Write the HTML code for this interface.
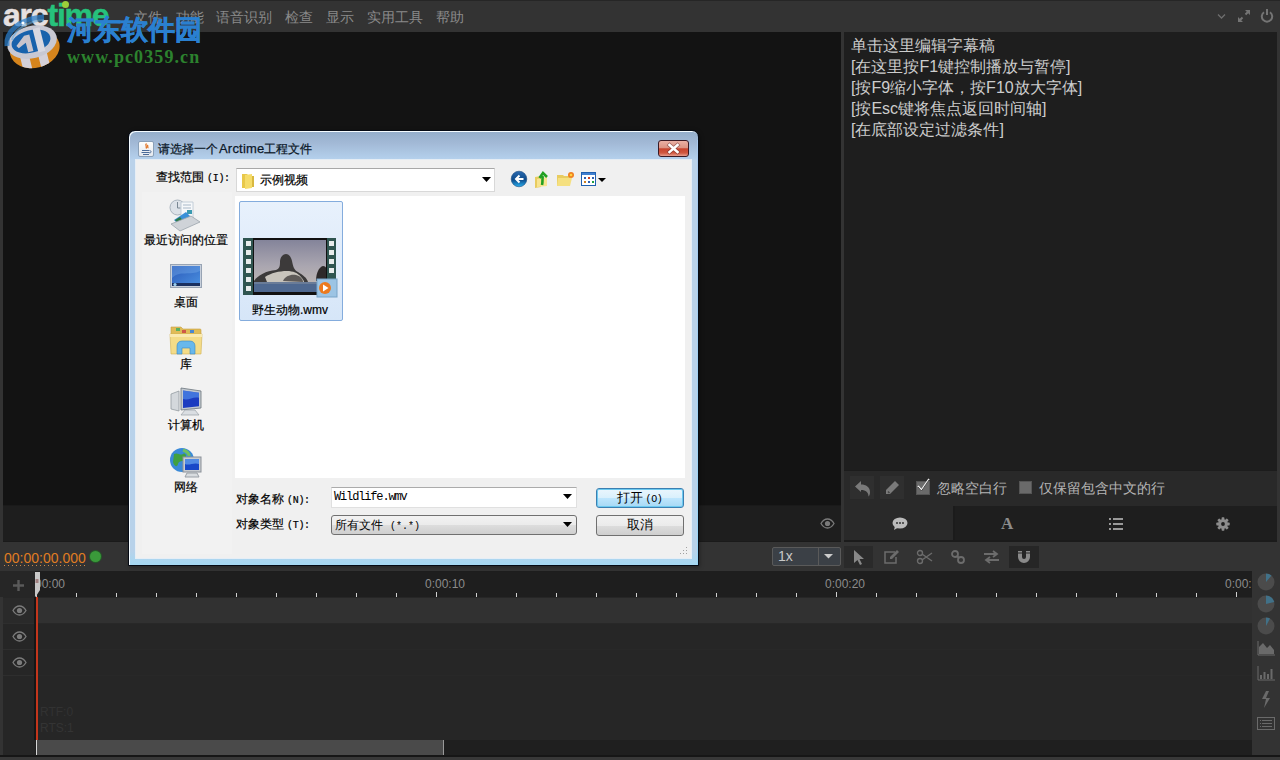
<!DOCTYPE html>
<html><head><meta charset="utf-8">
<style>
*{margin:0;padding:0;box-sizing:border-box}
html,body{width:1280px;height:760px;overflow:hidden;background:#333;font-family:"Liberation Sans",sans-serif}
.a{position:absolute}
#topline{left:0;top:0;width:1280px;height:1px;background:#262626}
.mi{position:absolute;top:9px;font-size:14px;color:#8a8a8a;line-height:16px;white-space:nowrap}
#video{left:3px;top:32px;width:838px;height:473px;background:#131313}
#vbar{left:3px;top:505px;width:838px;height:37px;background:#1e1e1e;border-top:1px solid #1a1a1a;border-bottom:1px solid #1a1a1a}
#rtext{left:844px;top:32px;width:433px;height:438px;background:#1e1e1e}
.rl{position:absolute;left:7px;font-size:16px;color:#cdcdcd;line-height:21px;white-space:nowrap}
#rtool{left:844px;top:470px;width:433px;height:36px;background:#292929;border-top:1px solid #1c1c1c}
#rtabs{left:844px;top:506px;width:433px;height:36px;background:#1e1e1e}
#timebar{left:0;top:542px;width:1280px;height:29px;background:#333}
#ruler{left:35px;top:571px;width:1217px;height:26px;background:#1e1e1e}
#tleft{left:3px;top:571px;width:32px;height:184px;background:#262626}
#tracks{left:35px;top:597px;width:1217px;height:143px;background:#262626}
#scroll{left:35px;top:740px;width:1217px;height:15px;background:#1f1f1f}
#rcol{left:1252px;top:571px;width:28px;height:184px;background:#333}
/* dialog */
#dlg{left:128px;top:130px;width:571px;height:436px;border:1px solid #050a14;filter:drop-shadow(1px 1px 2px rgba(0,0,0,.3));border-radius:7px 7px 0 0;background:linear-gradient(180deg,#93adca 0,#a2b9d6 12px,#b4d0ec 28px,#bad2ea 29px,#b8d2ea 420px,#a6d8f2 433px);box-shadow:inset 1px 1px 0 #f4fbff;}
#dinner{left:136px;top:160px;width:555px;height:398px;background:#f0f0f0}
.dt{position:absolute;font-size:13px;color:#000;line-height:15px;white-space:nowrap;-webkit-text-stroke:0.2px #000}
.pl{position:absolute;width:90px;text-align:center;font-size:12px;color:#000;line-height:14px;white-space:nowrap;-webkit-text-stroke:0.2px #000}
.m{font-family:'Liberation Mono',monospace;font-size:10px;letter-spacing:-0.3px;margin-left:3px}
.btn{position:absolute;border:1px solid #707070;border-radius:3px;background:linear-gradient(#f2f2f2,#ebebeb 50%,#dddddd 51%,#cfcfcf);text-align:center;font-size:13px;line-height:18px;color:#000}
</style></head><body>
<div class="a" id="topline"></div>
<span class="mi" style="left:134px">文件</span>
<span class="mi" style="left:176px">功能</span>
<span class="mi" style="left:216px">语音识别</span>
<span class="mi" style="left:285px">检查</span>
<span class="mi" style="left:326px">显示</span>
<span class="mi" style="left:367px">实用工具</span>
<span class="mi" style="left:436px">帮助</span>

<div class="a" id="video"></div>
<div class="a" id="vbar"></div>
<div class="a" id="rtext">
  <div class="rl" style="top:3px">单击这里编辑字幕稿</div>
  <div class="rl" style="top:24px">[在这里按F1键控制播放与暂停]</div>
  <div class="rl" style="top:45px">[按F9缩小字体，按F10放大字体]</div>
  <div class="rl" style="top:66px">[按Esc键将焦点返回时间轴]</div>
  <div class="rl" style="top:87px">[在底部设定过滤条件]</div>
</div>
<div class="a" id="rtool"></div>
<div class="a" id="rtabs"></div>
<div class="a" id="timebar"></div>
<div class="a" id="ruler"></div>
<div class="a" id="tleft"></div>
<div class="a" id="tracks"></div>
<div class="a" id="scroll"></div>
<div class="a" id="rcol"></div>


<!-- right toolbar -->
<div class="a" style="left:850px;top:476px;width:24px;height:23px;background:#2f2f2f"></div>
<svg class="a" style="left:850px;top:476px" width="24" height="23" viewBox="0 0 24 23"><path d="M5 10.5L11 5v3.5c5 0 9 2.5 9 7.5 0 2-0.5 3.5-1.5 4.5 0-4-2.5-6.5-7.5-6.5V16z" fill="#7a7a7a"/></svg>
<div class="a" style="left:880px;top:476px;width:24px;height:23px;background:#2f2f2f"></div>
<svg class="a" style="left:880px;top:476px" width="24" height="23" viewBox="0 0 24 23"><path d="M15 5l4 4-9 9H6v-4z" fill="#7a7a7a"/><path d="M8 15.5l1.5 1.5" stroke="#444" stroke-width="1.5"/></svg>
<div class="a" style="left:916px;top:481px;width:14px;height:14px;background:#6a6a6a;border:1px solid #555"></div>
<svg class="a" style="left:914px;top:477px" width="18" height="18" viewBox="0 0 18 18"><path d="M4 9l3.5 4L15 2" stroke="#f0f0f0" stroke-width="1.6" fill="none"/><path d="M4 10l3.5 4L15 3" stroke="#111" stroke-width="1" fill="none" opacity=".7"/></svg>
<div class="a" style="left:937px;top:479px;font-size:14px;color:#b4b4b4;line-height:18px;white-space:nowrap">忽略空白行</div>
<div class="a" style="left:1019px;top:481px;width:13px;height:13px;background:#6a6a6a;border:1px solid #555"></div>
<div class="a" style="left:1039px;top:479px;font-size:14px;color:#b4b4b4;line-height:18px;white-space:nowrap">仅保留包含中文的行</div>
<!-- tabs -->
<div class="a" style="left:844px;top:506px;width:109px;height:36px;background:#292929"></div>
<div class="a" style="left:953px;top:506px;width:2px;height:36px;background:#1b1b1b"></div>
<div class="a" style="left:844px;top:540px;width:433px;height:2px;background:#1b1b1b"></div>
<svg class="a" style="left:891px;top:516px" width="18" height="16" viewBox="0 0 18 16"><ellipse cx="9" cy="7" rx="7.5" ry="5.5" fill="#bbb"/><path d="M4 10l-1 4 5-3z" fill="#bbb"/><circle cx="6" cy="7" r="1" fill="#333"/><circle cx="9" cy="7" r="1" fill="#333"/><circle cx="12" cy="7" r="1" fill="#333"/></svg>
<div class="a" style="left:1001px;top:515px;font-family:'Liberation Serif',serif;font-weight:bold;font-size:17px;color:#8c8c8c;line-height:18px">A</div>
<svg class="a" style="left:1108px;top:517px" width="16" height="14" viewBox="0 0 16 14"><g fill="#999"><rect x="1" y="1" width="2" height="2"/><rect x="1" y="6" width="2" height="2"/><rect x="1" y="11" width="2" height="2"/><rect x="5" y="1" width="10" height="2"/><rect x="5" y="6" width="10" height="2"/><rect x="5" y="11" width="10" height="2"/></g></svg>
<svg class="a" style="left:1216px;top:517px" width="14" height="14" viewBox="0 0 14 14"><g fill="#8c8c8c"><circle cx="7" cy="7" r="4.8"/><rect x="5.6" y="0.3" width="2.8" height="13.4" rx=".6"/><rect x="0.3" y="5.6" width="13.4" height="2.8" rx=".6"/><rect x="5.6" y="0.3" width="2.8" height="13.4" rx=".6" transform="rotate(45 7 7)"/><rect x="5.6" y="0.3" width="2.8" height="13.4" rx=".6" transform="rotate(-45 7 7)"/></g><circle cx="7" cy="7" r="1.9" fill="#1e1e1e"/></svg>
<!-- video bar eye -->
<svg class="a" style="left:820px;top:518px" width="15" height="11" viewBox="0 0 15 11"><path d="M1 5.5C3 2 5 1 7.5 1S12 2 14 5.5C12 9 10 10 7.5 10S3 9 1 5.5z" fill="none" stroke="#7a7a7a" stroke-width="1.3"/><circle cx="7.5" cy="5.5" r="2.6" fill="#7a7a7a"/></svg>

<!-- time bar -->
<div class="a" style="left:4px;top:549px;font-size:14px;color:#e07d22;line-height:18px;white-space:nowrap">00:00:00.000</div>
<div class="a" style="left:4px;top:565px;width:82px;height:1px;background:repeating-linear-gradient(90deg,#c8884a 0 1px,transparent 1px 4px)"></div>
<div class="a" style="left:90px;top:551px;width:11px;height:11px;border-radius:50%;background:#3a9a3a;box-shadow:0 0 0 1px #245a28"></div>
<div class="a" style="left:772px;top:547px;width:69px;height:19px;border:1px solid #5a5a5a;border-radius:2px;background:#3b4046"></div>
<div class="a" style="left:818px;top:548px;width:1px;height:17px;background:#5a5a5a"></div>
<div class="a" style="left:778px;top:548px;font-size:14px;color:#c8c8c8;line-height:17px">1x</div>
<svg class="a" style="left:824px;top:554px" width="10" height="6"><path d="M0 0h9l-4.5 4.5z" fill="#ccc"/></svg>
<div class="a" style="left:844px;top:546px;width:29px;height:22px;background:#2a2a2a"></div>
<svg class="a" style="left:851px;top:548px" width="14" height="18" viewBox="0 0 14 18"><path d="M3 2v13l3.5-3 2.5 5 2-1-2.5-5H13z" fill="#888"/></svg>
<svg class="a" style="left:883px;top:549px" width="17" height="16" viewBox="0 0 17 16"><path d="M12 3H2v11h11V8" fill="none" stroke="#6c6c6c" stroke-width="1.5"/><path d="M14 1l2 2-7 7H7V8z" fill="#6c6c6c"/></svg>
<svg class="a" style="left:916px;top:549px" width="17" height="16" viewBox="0 0 17 16"><circle cx="4" cy="12" r="2.5" fill="none" stroke="#6c6c6c" stroke-width="1.4"/><circle cx="4" cy="4" r="2.5" fill="none" stroke="#6c6c6c" stroke-width="1.4"/><path d="M6 5l10 7M6 11l10-7" stroke="#6c6c6c" stroke-width="1.4"/></svg>
<svg class="a" style="left:950px;top:549px" width="17" height="16" viewBox="0 0 17 16"><circle cx="5" cy="5" r="3" fill="none" stroke="#6c6c6c" stroke-width="1.8"/><circle cx="11" cy="11" r="3" fill="none" stroke="#6c6c6c" stroke-width="1.8"/><path d="M7 7l2 2" stroke="#6c6c6c" stroke-width="1.8"/></svg>
<svg class="a" style="left:983px;top:549px" width="17" height="16" viewBox="0 0 17 16"><path d="M1 5h12M10 2l4 3-4 3M16 11H4M7 8l-4 3 4 3" fill="none" stroke="#6c6c6c" stroke-width="1.8"/></svg>
<div class="a" style="left:1009px;top:546px;width:30px;height:22px;background:#262626"></div>
<svg class="a" style="left:1016px;top:549px" width="16" height="16" viewBox="0 0 16 16"><path d="M2 2h4v6a2 2 0 0 0 4 0V2h4v6a6 6 0 0 1-12 0z" fill="#8a8a8a"/><path d="M2 4h4M10 4h4" stroke="#262626" stroke-width="1"/></svg>

<!-- ruler -->
<div class="a" style="left:25px;top:577px;font-size:12px;color:#8c8c8c;line-height:14px;white-space:nowrap">0:00:00</div>
<div class="a" style="left:425px;top:577px;font-size:12px;color:#8c8c8c;line-height:14px;white-space:nowrap">0:00:10</div>
<div class="a" style="left:825px;top:577px;font-size:12px;color:#8c8c8c;line-height:14px;white-space:nowrap">0:00:20</div>
<div class="a" style="left:1225px;top:577px;font-size:12px;color:#8c8c8c;line-height:14px;white-space:nowrap">0:00:30</div>
<div class="a" style="left:36px;top:592px;width:1px;height:5px;background:#d0d0d0"></div>
<div class="a" style="left:76px;top:593px;width:1px;height:4px;background:#d0d0d0"></div>
<div class="a" style="left:116px;top:593px;width:1px;height:4px;background:#d0d0d0"></div>
<div class="a" style="left:156px;top:593px;width:1px;height:4px;background:#d0d0d0"></div>
<div class="a" style="left:196px;top:593px;width:1px;height:4px;background:#d0d0d0"></div>
<div class="a" style="left:236px;top:593px;width:1px;height:4px;background:#d0d0d0"></div>
<div class="a" style="left:276px;top:593px;width:1px;height:4px;background:#d0d0d0"></div>
<div class="a" style="left:316px;top:593px;width:1px;height:4px;background:#d0d0d0"></div>
<div class="a" style="left:356px;top:593px;width:1px;height:4px;background:#d0d0d0"></div>
<div class="a" style="left:396px;top:593px;width:1px;height:4px;background:#d0d0d0"></div>
<div class="a" style="left:436px;top:592px;width:1px;height:5px;background:#d0d0d0"></div>
<div class="a" style="left:476px;top:593px;width:1px;height:4px;background:#d0d0d0"></div>
<div class="a" style="left:516px;top:593px;width:1px;height:4px;background:#d0d0d0"></div>
<div class="a" style="left:556px;top:593px;width:1px;height:4px;background:#d0d0d0"></div>
<div class="a" style="left:596px;top:593px;width:1px;height:4px;background:#d0d0d0"></div>
<div class="a" style="left:636px;top:593px;width:1px;height:4px;background:#d0d0d0"></div>
<div class="a" style="left:676px;top:593px;width:1px;height:4px;background:#d0d0d0"></div>
<div class="a" style="left:716px;top:593px;width:1px;height:4px;background:#d0d0d0"></div>
<div class="a" style="left:756px;top:593px;width:1px;height:4px;background:#d0d0d0"></div>
<div class="a" style="left:796px;top:593px;width:1px;height:4px;background:#d0d0d0"></div>
<div class="a" style="left:836px;top:592px;width:1px;height:5px;background:#d0d0d0"></div>
<div class="a" style="left:876px;top:593px;width:1px;height:4px;background:#d0d0d0"></div>
<div class="a" style="left:916px;top:593px;width:1px;height:4px;background:#d0d0d0"></div>
<div class="a" style="left:956px;top:593px;width:1px;height:4px;background:#d0d0d0"></div>
<div class="a" style="left:996px;top:593px;width:1px;height:4px;background:#d0d0d0"></div>
<div class="a" style="left:1036px;top:593px;width:1px;height:4px;background:#d0d0d0"></div>
<div class="a" style="left:1076px;top:593px;width:1px;height:4px;background:#d0d0d0"></div>
<div class="a" style="left:1116px;top:593px;width:1px;height:4px;background:#d0d0d0"></div>
<div class="a" style="left:1156px;top:593px;width:1px;height:4px;background:#d0d0d0"></div>
<div class="a" style="left:1196px;top:593px;width:1px;height:4px;background:#d0d0d0"></div>
<div class="a" style="left:1236px;top:592px;width:1px;height:5px;background:#d0d0d0"></div>
<div class="a" style="left:0;top:571px;width:35px;height:26px;background:#262626"></div>
<svg class="a" style="left:12px;top:579px" width="13" height="13" viewBox="0 0 13 13"><path d="M6.5 1v11M1 6.5h11" stroke="#5a5a5a" stroke-width="2.4"/></svg>
<div class="a" style="left:1252px;top:571px;width:28px;height:26px;background:#333"></div>
<!-- tracks -->
<div class="a" style="left:35px;top:598px;width:1217px;height:25px;background:#313131"></div>
<div class="a" style="left:35px;top:623px;width:1217px;height:1px;background:#282828"></div>
<div class="a" style="left:35px;top:649px;width:1217px;height:1px;background:#282828"></div>
<div class="a" style="left:35px;top:675px;width:1217px;height:1px;background:#282828"></div>
<div class="a" style="left:3px;top:623px;width:32px;height:1px;background:#2e2e2e"></div>
<div class="a" style="left:3px;top:649px;width:32px;height:1px;background:#2e2e2e"></div>
<div class="a" style="left:3px;top:675px;width:32px;height:1px;background:#2e2e2e"></div>
<div class="a" style="left:3px;top:598px;width:32px;height:25px;background:#2a2a2a"></div>
<svg class="a" style="left:12px;top:605px" width="15" height="11" viewBox="0 0 15 11"><path d="M1 5.5C3 2 5 1 7.5 1S12 2 14 5.5C12 9 10 10 7.5 10S3 9 1 5.5z" fill="none" stroke="#7c7c7c" stroke-width="1.3"/><circle cx="7.5" cy="5.5" r="2.6" fill="#7c7c7c"/></svg>
<svg class="a" style="left:12px;top:631px" width="15" height="11" viewBox="0 0 15 11"><path d="M1 5.5C3 2 5 1 7.5 1S12 2 14 5.5C12 9 10 10 7.5 10S3 9 1 5.5z" fill="none" stroke="#7c7c7c" stroke-width="1.3"/><circle cx="7.5" cy="5.5" r="2.6" fill="#7c7c7c"/></svg>
<svg class="a" style="left:12px;top:657px" width="15" height="11" viewBox="0 0 15 11"><path d="M1 5.5C3 2 5 1 7.5 1S12 2 14 5.5C12 9 10 10 7.5 10S3 9 1 5.5z" fill="none" stroke="#7c7c7c" stroke-width="1.3"/><circle cx="7.5" cy="5.5" r="2.6" fill="#7c7c7c"/></svg>
<div class="a" style="left:40px;top:705px;font-size:12px;color:#323232;line-height:14px">RTF:0</div>
<div class="a" style="left:40px;top:721px;font-size:12px;color:#343434;line-height:14px">RTS:1</div>
<div class="a" style="left:36px;top:740px;width:408px;height:15px;background:#4a4a4a;border-right:1px solid #999"></div>
<div class="a" style="left:0;top:755px;width:1280px;height:2px;background:#161616"></div>
<div class="a" style="left:0;top:757px;width:1280px;height:3px;background:#383838"></div>
<!-- playhead -->
<div class="a" style="left:34px;top:597px;width:2px;height:143px;background:#161616"></div>
<div class="a" style="left:36px;top:597px;width:2px;height:143px;background:#c4361c"></div>
<div class="a" style="left:36px;top:740px;width:1px;height:15px;background:#d8d8d8"></div>
<svg class="a" style="left:34px;top:572px" width="8" height="26" viewBox="0 0 8 26"><path d="M1 0h5v18l-4.5 7L1 24z" fill="#c8c8c8"/><rect x="1.5" y="7" width="3" height="4" fill="#a08080"/></svg>
<!-- right column -->
<svg class="a" style="left:1257px;top:573px" width="18" height="18" viewBox="0 0 18 18"><circle cx="9" cy="9" r="8.5" fill="#4b4b4b"/><path d="M9 9V0.5A8.5 8.5 0 0 1 14.5 2.5z" fill="#3a8ab0" opacity=".6"/></svg>
<svg class="a" style="left:1257px;top:595px" width="18" height="18" viewBox="0 0 18 18"><circle cx="9" cy="9" r="8.5" fill="#4b4b4b"/><path d="M9 9V0.5A8.5 8.5 0 0 1 17.3 7z" fill="#3a8ab0" opacity=".6"/></svg>
<svg class="a" style="left:1257px;top:617px" width="18" height="18" viewBox="0 0 18 18"><circle cx="9" cy="9" r="8.5" fill="#4b4b4b"/><path d="M9 9V0.5A8.5 8.5 0 0 1 13 1.5z" fill="#3a8ab0" opacity=".6"/></svg>
<svg class="a" style="left:1257px;top:641px" width="18" height="15" viewBox="0 0 18 15"><path d="M1 0v14h17" stroke="#6a6a6a" fill="none"/><path d="M2 13V6l4-4 4 5 3-3 4 5v4z" fill="#6a6a6a"/></svg>
<svg class="a" style="left:1257px;top:666px" width="18" height="15" viewBox="0 0 18 15"><path d="M1 0v14h17" stroke="#6a6a6a" fill="none"/><g fill="#6a6a6a"><rect x="3" y="9" width="2" height="4"/><rect x="6.5" y="6" width="2" height="7"/><rect x="10" y="8" width="2" height="5"/><rect x="13.5" y="3" width="2" height="10"/></g></svg>
<svg class="a" style="left:1260px;top:691px" width="12" height="17" viewBox="0 0 12 17"><path d="M6 0L2 8h4l-2 9 6-10H6l3-7z" fill="#6a6a6a"/></svg>
<svg class="a" style="left:1257px;top:717px" width="18" height="13" viewBox="0 0 18 13"><rect x="0.5" y="0.5" width="17" height="12" fill="none" stroke="#6a6a6a"/><g fill="#6a6a6a"><rect x="3" y="3" width="1" height="1"/><rect x="3" y="6" width="1" height="1"/><rect x="3" y="9" width="1" height="1"/><rect x="5" y="3" width="10" height="1"/><rect x="5" y="6" width="10" height="1"/><rect x="5" y="9" width="10" height="1"/></g></svg>

<!-- top right icons -->
<svg class="a" style="left:1216px;top:12px" width="11" height="8" viewBox="0 0 11 8"><path d="M2 2.5l3.5 3.5 3.5-3.5" stroke="#6e6e6e" stroke-width="1.3" fill="none"/></svg>
<svg class="a" style="left:1237px;top:9px" width="14" height="14" viewBox="0 0 14 14"><path d="M8 1h5v5zM6 13H1V8z" fill="#747474"/><path d="M11 3L8.5 5.5M3 11l2.5-2.5" stroke="#747474" stroke-width="2"/></svg>
<svg class="a" style="left:1260px;top:8px" width="14" height="15" viewBox="0 0 14 15"><path d="M4 4.2A5.2 5.2 0 1 0 10 4.2" stroke="#747474" stroke-width="2" fill="none"/><path d="M7 1v6" stroke="#747474" stroke-width="2"/></svg>

<!-- logo -->
<div class="a" style="left:3px;top:-5px;font-size:32px;font-weight:bold;letter-spacing:-1.2px;color:#e6e0e0;line-height:40px;white-space:nowrap;-webkit-text-stroke:0.5px currentColor">arc<span style="color:#26c27c;-webkit-text-stroke:0.5px #26c27c">time</span></div>
<div class="a" style="left:62px;top:1px;width:7px;height:7px;border-radius:50%;background:#9ccf3a"></div>
<svg class="a" style="left:0px;top:8px" width="66" height="62" viewBox="0 0 66 62">
 <g transform="translate(33 43) scale(0.9) translate(-33 -40) rotate(-14 33 34)">
 <defs><clipPath id="oc"><ellipse cx="34" cy="38" rx="28" ry="21"/></clipPath></defs>
 <ellipse cx="34" cy="38" rx="28" ry="21" fill="#d5841c"/>
 <path d="M16 40h10v22H16zM36 44h10v18H36z" fill="#d4d0d8" clip-path="url(#oc)"/>
 <ellipse cx="33" cy="30" rx="28" ry="18" fill="#c8c8d2"/>
 <ellipse cx="32" cy="29" rx="22" ry="12.5" fill="#1862ac"/>
 <path d="M15 30l11-9h6v19h-6V29l-9 4z" fill="#c8c4cc"/>
 <path d="M37 16h8v27h-8z" fill="#d8d8e0"/>
 </g>
 <path d="M7 38C5 24 20 10 44 9" stroke="#2a7cc8" stroke-width="5" fill="none" opacity=".75"/>
 <path d="M12 32C14 22 28 13 44 12" stroke="#60a8e0" stroke-width="2" fill="none" opacity=".6"/>
 <circle cx="23" cy="15" r="1.6" fill="#fff"/>
</svg>
<div class="a" style="left:67px;top:14px;font-size:27px;font-weight:bold;color:#2a80d0;line-height:32px;white-space:nowrap;letter-spacing:0px;-webkit-text-stroke:0.6px #2a80d0">河东软件园</div>
<div class="a" style="left:67px;top:47px;font-family:'Liberation Serif',serif;font-size:18px;font-weight:bold;color:#2c822e;line-height:20px;white-space:nowrap;letter-spacing:1.1px">www.pc0359.cn</div>

<!-- DIALOG -->
<div class="a" id="dlg"></div>
<div class="a" id="dinner"></div>
<div class="a" style="left:697px;top:140px;width:1px;height:425px;background:linear-gradient(#a8c8ec,#98d4f4)"></div>
<div class="a" style="left:135px;top:159px;width:557px;height:400px;border:1px solid #e6eef6;border-top-color:#e4ecf4"></div>
<!-- title -->
<div class="a" style="left:138px;top:141px;width:16px;height:16px;border:1px solid #8aa0b8;border-radius:2px;background:linear-gradient(#fdfdfd,#e4e8ee)"></div>
<svg class="a" style="left:138px;top:141px" width="16" height="16" viewBox="0 0 16 16"><path d="M8.5 2.5c-2 1.5 1 3-0.5 5M10 4c-1.2 1 .5 2-.3 3.2" stroke="#e07020" stroke-width="1.3" fill="none"/><path d="M4 9.5h7M3.5 11.5h8M5 13.5h6" stroke="#4a6a98" stroke-width="1"/><path d="M11.5 9.5c2 0 2 2.5 0 2.5" stroke="#4a6a98" fill="none"/></svg>
<div class="dt" style="left:158px;top:141px;font-size:12px;color:#0c1828;-webkit-text-stroke:0.25px #0c1828">请选择一个<span style="font-size:13px;letter-spacing:0.2px;margin-left:1px">Arctime</span>工程文件</div>
<div class="a" style="left:658px;top:140px;width:31px;height:17px;border:1px solid #3a1a24;border-radius:3px;background:linear-gradient(#eab0a4,#dc9484 45%,#c8442e 52%,#d05840 80%,#e8a090)"></div>
<svg class="a" style="left:658px;top:140px" width="31" height="17" viewBox="0 0 31 17"><path d="M11.5 5l8 7M19.5 5l-8 7" stroke="#5a2020" stroke-width="4" stroke-linecap="square" opacity=".5"/><path d="M11.5 5l8 7M19.5 5l-8 7" stroke="#fff" stroke-width="2.6" stroke-linecap="square"/></svg>

<!-- look in -->
<div class="dt" style="left:156px;top:170px;font-size:12px">查找范围<span class="m">(I):</span></div>
<div class="a" style="left:236px;top:168px;width:259px;height:24px;background:#fff;border:1px solid #d8d8d8;border-top-color:#a8a8a8"></div>
<svg class="a" style="left:241px;top:172px" width="15" height="17" viewBox="0 0 15 17"><path d="M1 2h5l1 1v13H1z" fill="#e8c84a"/><path d="M4 3l7-1v14l-7 1z" fill="#f5dc6a"/><path d="M11 4h2v11h-2z" fill="#d8b840"/></svg>
<div class="dt" style="left:260px;top:173px;font-size:12px">示例视频</div>
<svg class="a" style="left:482px;top:177px" width="10" height="6"><path d="M0 0h9l-4.5 5z" fill="#000"/></svg>
<!-- nav icons -->
<svg class="a" style="left:510px;top:170px" width="18" height="18" viewBox="0 0 18 18"><defs><linearGradient id="bk" x1="0" y1="0" x2="0" y2="1"><stop offset="0" stop-color="#2a6ab0"/><stop offset=".55" stop-color="#0d4a8a"/><stop offset="1" stop-color="#28b0f0"/></linearGradient></defs><circle cx="9" cy="9" r="7.8" fill="url(#bk)" stroke="#1a4a80" stroke-width=".6"/><path d="M13.5 9H6.5M9.5 5.5L6 9l3.5 3.5" stroke="#fff" stroke-width="2" fill="none"/></svg>
<svg class="a" style="left:534px;top:170px" width="18" height="18" viewBox="0 0 18 18"><path d="M1 7l6-1v11l-6 1z" fill="#e8cc60"/><path d="M3 9l10-2v9L3 17z" fill="#f8e490"/><path d="M8 15c1-4 0-7 1-9M5.5 8L9 3l4 4" stroke="#22a022" stroke-width="2.6" fill="none"/></svg>
<svg class="a" style="left:556px;top:170px" width="20" height="18" viewBox="0 0 20 18"><path d="M1 5h6l1 1h6v10H1z" fill="#e8cc60"/><path d="M2 8h14l-2 8H1z" fill="#f5e080"/><circle cx="15" cy="5" r="3" fill="#f08020"/><circle cx="15" cy="5" r="1.3" fill="#ffd040"/></svg>
<svg class="a" style="left:580px;top:171px" width="27" height="16" viewBox="0 0 27 16"><rect x="1.5" y="1.5" width="14" height="13" fill="#fff" stroke="#2060b0"/><rect x="2" y="2" width="13" height="2" fill="#4080d0"/><rect x="4" y="6" width="2" height="2" fill="#3060b0"/><rect x="8" y="6" width="2" height="2" fill="#d04020"/><rect x="12" y="6" width="2" height="2" fill="#3060b0"/><rect x="4" y="10" width="2" height="2" fill="#d08020"/><rect x="8" y="10" width="2" height="2" fill="#3060b0"/><rect x="12" y="10" width="2" height="2" fill="#20a040"/><path d="M18 7h8l-4 4z" fill="#000"/></svg>

<!-- places bar -->
<div class="a" style="left:142px;top:192px;width:90px;height:362px;background:#f2f2f2"></div>
<svg class="a" style="left:168px;top:198px" width="34" height="34" viewBox="0 0 34 34"><circle cx="9.5" cy="9.5" r="7.5" fill="#dde2e8" stroke="#aab4be"/><path d="M9.5 4v6h3" stroke="#7a8894" fill="none"/><path d="M13 4h12v17H13z" fill="#f6f8fa" stroke="#b8c4d0" stroke-width=".8"/><path d="M15 7h8M15 10h8" stroke="#a8b8c8"/><rect x="19" y="12" width="5" height="4" fill="#3a9ab0"/><path d="M6 22l12-8 6 6-12 8z" fill="#3a90d8"/><path d="M7 22l5-3 4 5-5 3z" fill="#2a7a4a"/><path d="M3 26l20-8 9 6-20 9z" fill="#cfd3d8" stroke="#9ca4ac" stroke-width=".8"/></svg>
<div class="pl" style="left:141px;top:233px">最近访问的位置</div>
<svg class="a" style="left:170px;top:264px" width="32" height="24" viewBox="0 0 32 24"><defs><linearGradient id="dk" x1="0" y1="0" x2="1" y2="1"><stop offset="0" stop-color="#2a58b8"/><stop offset="1" stop-color="#4a90e0"/></linearGradient></defs><rect x="0.5" y="0.5" width="31" height="23" fill="#c8d0dc" stroke="#98a4b4"/><rect x="2" y="2" width="28" height="19" fill="url(#dk)"/><path d="M2 2h28v5C20 12 10 6 2 14z" fill="#80b8f0" opacity=".35"/><rect x="2" y="19" width="28" height="3" fill="#1a3060"/><circle cx="5" cy="20.5" r="1.6" fill="#9ad0f0"/></svg>
<div class="pl" style="left:141px;top:295px">桌面</div>
<svg class="a" style="left:169px;top:325px" width="34" height="30" viewBox="0 0 34 30"><path d="M2 2h10l2 2h17a1 1 0 0 1 1 1v5H2z" fill="#e0bc58" stroke="#c8a040" stroke-width=".6"/><rect x="7" y="3" width="4" height="3" fill="#58b060"/><rect x="13" y="5" width="4" height="3" fill="#d05848"/><rect x="21" y="5" width="4" height="3" fill="#4a88d0"/><path d="M1 9h32l-1 20H2z" fill="#f4dc88" stroke="#d0b050" stroke-width=".6"/><path d="M1 9h32v3H1z" fill="#faeab0"/><path d="M8 29v-8c0-3 2-5 5-5h8c3 0 5 2 5 5v8h-5v-6h-8v6z" fill="#68b8ec" stroke="#3a88c0" stroke-width=".6"/></svg>
<div class="pl" style="left:141px;top:357px">库</div>
<svg class="a" style="left:169px;top:386px" width="34" height="31" viewBox="0 0 34 31"><path d="M2 8l8-3v20l-8-2z" fill="#d4d8dc" stroke="#8a9298" stroke-width=".7"/><path d="M12 2l20 3v17l-20 2z" fill="#c4cad0" stroke="#6a747c" stroke-width=".8"/><path d="M14 4.5l16 2.3v13.5l-16 1.7z" fill="#1c3cc0"/><path d="M14 4.5l16 2.3v5C24 10 20 15 14 13z" fill="#5a9af0" opacity=".6"/><path d="M16 24h10l4 5H12z" fill="#dadee2" stroke="#9aa0a6" stroke-width=".7"/></svg>
<div class="pl" style="left:141px;top:418px">计算机</div>
<svg class="a" style="left:169px;top:446px" width="34" height="32" viewBox="0 0 34 32"><circle cx="13" cy="14" r="12" fill="#3a8ad8"/><path d="M5 8c4-2 6 2 9 0s4 4 2 6-6 0-7 4-4 2-5-2z" fill="#40a040"/><path d="M14 4c3 1 6 3 6 6" stroke="#70c060" stroke-width="3" fill="none"/><rect x="14" y="11" width="18" height="15" fill="#c8ccd0" stroke="#8a9098"/><rect x="16" y="13" width="14" height="11" fill="#1848c8"/><path d="M16 13h14v5C25 16 20 20 16 18z" fill="#6aa8f0" opacity=".7"/><path d="M18 27h10l2 4H16z" fill="#d8dcdf" stroke="#9aa0a6"/></svg>
<div class="pl" style="left:141px;top:480px">网络</div>

<!-- file list -->
<div class="a" style="left:235px;top:196px;width:450px;height:282px;background:#fff"></div>
<div class="a" style="left:239px;top:201px;width:104px;height:120px;border:1px solid #84acdd;border-radius:2px;background:linear-gradient(#e8f1fc,#d6e6f8)"></div>
<svg class="a" style="left:243px;top:238px" width="95" height="60" viewBox="0 0 95 60">
 <defs><linearGradient id="sky" x1="0" y1="0" x2="0" y2="1"><stop offset="0" stop-color="#84849a"/><stop offset=".5" stop-color="#aaa6b0"/><stop offset="1" stop-color="#c4bcb4"/></linearGradient></defs>
 <rect x="0" y="0" width="93" height="57" fill="#2f5550"/>
 <rect x="10" y="0" width="74" height="57" fill="#111"/>
 <rect x="11" y="2" width="72" height="52" fill="url(#sky)"/>
 <g transform="translate(0 3)"><path d="M11 40c4-6 12-10 22-11 3-1 4-3 4-8 0-5 3-8 6-8 3 0 5 3 6 7 1 5 2 9 6 11 5 3 9 6 10 10H11z" fill="#3c3a3a"/>
 <path d="M22 36c6-4 14-6 22-6 6 0 11 2 14 6 2 2 3 4 3 5H24z" fill="#c8c4bc"/>
 <path d="M40 40c2-5 8-7 13-6 4 1 7 4 7 7z" fill="#5e5a58"/>
 <path d="M73 40c0-8 3-14 7-15 2 0 3 1 3 2v13z" fill="#2e2a2a"/></g>
 <rect x="11" y="44" width="72" height="10" fill="#4e6890"/>
 <path d="M11 44h72v2H11z" fill="#6a7c98"/>
 <g fill="#e8ecec"><rect x="3" y="3" width="5" height="5"/><rect x="3" y="12" width="5" height="5"/><rect x="3" y="21" width="5" height="5"/><rect x="3" y="30" width="5" height="5"/><rect x="3" y="39" width="5" height="5"/><rect x="3" y="48" width="5" height="5"/><rect x="86" y="3" width="5" height="5"/><rect x="86" y="12" width="5" height="5"/><rect x="86" y="21" width="5" height="5"/><rect x="86" y="30" width="5" height="5"/></g>
 <rect x="74" y="41" width="20" height="18" fill="#9cc4e4" stroke="#78a4c8"/>
 <circle cx="82" cy="50" r="6" fill="#ec7a1e"/><path d="M80 46.5v7l5.5-3.5z" fill="#fff"/>
</svg>
<div class="dt" style="left:252px;top:303px;font-size:12px">野生动物.wmv</div>

<!-- bottom fields -->
<div class="dt" style="left:236px;top:492px;font-size:12px">对象名称<span class="m">(N):</span></div>
<div class="a" style="left:331px;top:487px;width:246px;height:21px;background:#fff;border:1px solid #e0e0e0;border-top-color:#ababab"></div>
<div class="dt" style="left:334px;top:490px;font-family:'Liberation Mono',monospace;font-size:12px;letter-spacing:-1.15px;-webkit-text-stroke:0">Wildlife.wmv</div>
<svg class="a" style="left:563px;top:494px" width="10" height="6"><path d="M0 0h9l-4.5 5z" fill="#000"/></svg>
<div class="dt" style="left:236px;top:517px;font-size:12px">对象类型<span class="m">(T):</span></div>
<div class="btn" style="left:331px;top:515px;width:246px;height:20px;text-align:left;padding-left:3px;font-size:12px;line-height:18px">所有文件<span class="m" style="margin-left:7px;letter-spacing:0px">(*.*)</span></div>
<svg class="a" style="left:563px;top:522px" width="10" height="6"><path d="M0 0h9l-4.5 5z" fill="#000"/></svg>
<div class="btn" style="left:596px;top:488px;width:88px;height:20px;border-color:#3c7fb1;background:linear-gradient(#eaf6fd,#d9f0fc 50%,#bee6fd 51%,#a7d9f5);box-shadow:inset 0 0 0 1px #6ccaf0">打开<span class="m" style="margin-left:2px">(O)</span></div>
<div class="btn" style="left:596px;top:515px;width:88px;height:21px">取消</div>
<svg class="a" style="left:679px;top:546px" width="10" height="10"><g fill="#a0a0a0"><rect x="7" y="1" width="1" height="1"/><rect x="4" y="4" width="1" height="1"/><rect x="7" y="4" width="1" height="1"/><rect x="1" y="7" width="1" height="1"/><rect x="4" y="7" width="1" height="1"/><rect x="7" y="7" width="1" height="1"/></g></svg>
</body></html>
